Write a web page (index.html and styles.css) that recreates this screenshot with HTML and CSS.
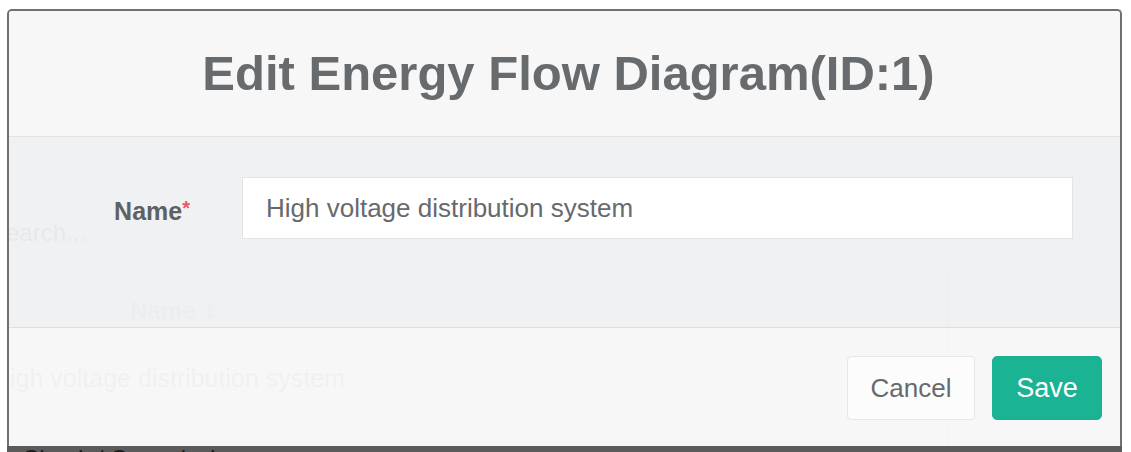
FILE: index.html
```html
<!DOCTYPE html>
<html lang="en">
<head>
<meta charset="utf-8">
<title>Edit Energy Flow Diagram</title>
<link rel="stylesheet" href="styles.css">
</head>
<body>
<div class="page">
  <div class="page-top"></div>
  <div class="search">Search...</div>
  <div class="table">
    <div class="tr th">
      <div class="c1">Name <span class="sort">&#8661;</span></div>
      <div class="c2"></div>
    </div>
    <div class="tr td">
      <div class="c1">High voltage distribution system</div>
      <div class="c2"></div>
    </div>
  </div>
  <div class="strip"><span>Check / Commission company</span></div>
</div>

<div class="modal">
  <div class="modal-header">
    <h4 class="modal-title">Edit Energy Flow Diagram(ID:1)</h4>
  </div>
  <div class="modal-body">
    <div class="form-row">
      <label class="form-label">Name<span class="req">*</span></label>
      <div class="form-input">High voltage distribution system</div>
    </div>
  </div>
  <div class="modal-footer">
    <button class="btn btn-cancel">Cancel</button>
    <button class="btn btn-save">Save</button>
  </div>
</div>
</body>
</html>
```
FILE: styles.css
```css
html, body {
  margin: 0;
  padding: 0;
}
body {
  width: 1131px;
  height: 452px;
  overflow: hidden;
  background: #ffffff;
  font-family: "Liberation Sans", Arial, sans-serif;
  position: relative;
}

/* underlying page (seen through the modal) */
.page {
  height: 452px;
  margin: 0 9px 0 7px;
  overflow: hidden;
  display: flex;
  flex-direction: column;
  color: #555555;
}
.page-top {
  height: 210px;
  flex: none;
}
.search {
  height: 46px;
  line-height: 46px;
  font-size: 24px;
  text-indent: -17px;
  color: #555555;
  white-space: nowrap;
  flex: none;
}
.table {
  margin-top: 14px;
  flex: none;
}
.tr {
  display: flex;
}
.th {
  height: 82px;
  align-items: center;
}
.td {
  height: 94px;
}
.c1 {
  width: 941px;
  flex: none;
  white-space: nowrap;
}
.c2 {
  flex: 1;
  align-self: stretch;
  border-left: 1px solid #c8c8c8;
}
.th .c1 {
  padding-left: 123px;
  box-sizing: border-box;
  font-size: 24px;
  font-weight: bold;
  color: #b0b0b0;
}
.sort {
  font-size: 20px;
  font-weight: normal;
}
.td .c1 {
  line-height: 52px;
  font-size: 25px;
  text-indent: -15px;
  color: #777777;
}
.strip {
  height: 6px;
  background: #5b5b5b;
  overflow: hidden;
  flex: none;
}
.strip span {
  display: block;
  padding-left: 15px;
  padding-top: 1px;
  font-size: 24px;
  line-height: 24px;
  white-space: nowrap;
  color: #1c1c1c;
}

/* modal */
.modal {
  position: absolute;
  left: 7px;
  top: 9px;
  width: 1115px;
  height: 437px;
  box-sizing: border-box;
  border: 2px solid #707070;
  border-bottom: 0;
  border-radius: 5px 5px 0 0;
  overflow: hidden;
  display: flex;
  flex-direction: column;
}
.modal-header {
  height: 125px;
  flex: none;
  border-bottom: 1px solid #e3e3e3;
  background: rgba(247, 247, 247, 0.95);
  display: flex;
  align-items: center;
  justify-content: center;
}
.modal-title {
  margin: 0;
  font-size: 49px;
  font-weight: bold;
  color: #686b6d;
  line-height: 1;
  padding-left: 8px;
}
.modal-body {
  height: 190px;
  flex: none;
  background: rgba(239, 240, 241, 0.95);
  padding-top: 40px;
  box-sizing: border-box;
}
.form-row {
  display: grid;
  grid-template-columns: 181px 1fr;
  column-gap: 52px;
  margin-right: 47px;
}
.form-label {
  text-align: right;
  line-height: 62px;
  font-size: 25px;
  font-weight: bold;
  color: #5e6062;
}
.req {
  color: #ed5565;
  font-size: 20px;
  vertical-align: 5px;
}
.form-input {
  height: 62px;
  box-sizing: border-box;
  border: 1px solid #e2e3e4;
  background: #ffffff;
  padding: 0 23px;
  line-height: 60px;
  font-size: 26px;
  color: #676a6c;
}
.modal-footer {
  flex: 1;
  border-top: 1px solid #dedede;
  background: rgba(247, 247, 247, 0.95);
  display: flex;
  justify-content: flex-end;
  align-items: flex-start;
  padding: 28px 18px 0 0;
  gap: 17px;
}
.btn {
  height: 64px;
  box-sizing: border-box;
  font-family: "Liberation Sans", Arial, sans-serif;
  font-size: 26px;
  border-radius: 4px;
  padding: 0;
  cursor: pointer;
}
.btn-cancel {
  width: 128px;
  border: 1px solid #e4e6e8;
  background: #fcfcfc;
  color: #676a6c;
}
.btn-save {
  width: 110px;
  border: 1px solid #1ab394;
  background: #1ab394;
  color: #ffffff;
  font-size: 27px;
  border-radius: 5px;
}
```
